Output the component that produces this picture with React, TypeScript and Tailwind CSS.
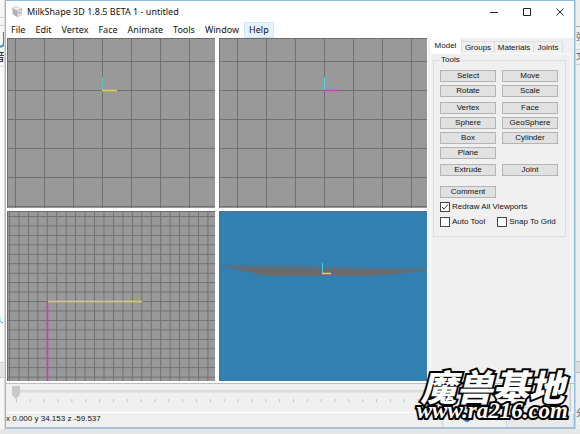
import React, {useState} from 'react';

const menus = ['File', 'Edit', 'Vertex', 'Face', 'Animate', 'Tools', 'Window', 'Help'];

const toolGroups = [
    [['Select', 'Move'], ['Rotate', 'Scale']],
    [['Vertex', 'Face'], ['Sphere', 'GeoSphere'], ['Box', 'Cylinder'], ['Plane']],
    [['Extrude', 'Joint']],
];

const Grid = ({id, x, y, step, children}: {id: string, x: number, y: number, step: number, children?: React.ReactNode}) => (
    <svg className="block h-full w-full bg-[#999999]" aria-hidden="true">
        <defs>
            <pattern id={id} x={x} y={y} width={step} height={step} patternUnits="userSpaceOnUse">
                <path d={`M0 .5H${step}M.5 0V${step}`} stroke="#707070" strokeWidth="1" fill="none" />
            </pattern>
        </defs>
        <rect width="100%" height="100%" fill={`url(#${id})`} />
        <path d="M0 .5H2000M.5 0V2000" stroke="#6c6c6c" fill="none" />
        {children}
    </svg>
)

const ToolButton = ({label}: {label: string}) => (
    <button type="button" className="flex h-3 w-14 items-center justify-center border border-[#b4b4b4] bg-[#e1e1e1] leading-none">
        {label}
    </button>
)

const Check = ({label, checked}: {label: string, checked?: boolean}) => {

    const [on, setOn] = useState(!!checked)

    return (
        <label className="flex items-center gap-0.5 whitespace-nowrap">
            <span className="relative block size-[10px]">
                <input type="checkbox" checked={on} onChange={() => setOn(!on)} className="block size-[10px] appearance-none border border-[#444] bg-white" />
                {on && (
                    <svg viewBox="0 0 10 10" className="pointer-events-none absolute inset-0 size-[10px]">
                        <path d="M2 5l2 2 4-4.5" stroke="#333" strokeWidth="1" fill="none" />
                    </svg>
                )}
            </span>
            {label}
        </label>
    )
}

const TitleBar = () => (
    <header className="flex h-[21px] items-center bg-white pl-[5px] pr-2.5">
        <svg viewBox="0 0 12 12" className="mr-1 size-3">
            <path d="M1 2L5 .5 11 3 6 5z" fill="#eee" stroke="#aaa" strokeWidth=".5" />
            <path d="M1 2L6 5 6.500 11 2 8.500z" fill="#b5b0ae" />
            <path d="M6 5L11 3 10.500 8.500 6.500 11z" fill="#e6e4e3" stroke="#999" strokeWidth=".5" />
            <path d="M7.500 6.500L9.500 5.500 9 7.500 7.500 8z" fill="#a98f8c" />
        </svg>
        <h1 className="flex-1 font-['Noto_Sans',sans-serif] text-[9px] leading-3">MilkShape 3D 1.8.5 BETA 1 - untitled</h1>
        <div className="flex gap-[25px]">
            <button type="button" aria-label="Minimize"><svg viewBox="0 0 8 8" className="size-2"><path d="M0 4.500H8" stroke="#222" /></svg></button>
            <button type="button" aria-label="Maximize"><svg viewBox="0 0 8 8" className="size-2"><path d="M.5 .5H7.500V7.500H.5z" fill="none" stroke="#222" /></svg></button>
            <button type="button" aria-label="Close"><svg viewBox="0 0 8 8" className="size-2"><path d="M.5 .5L7.500 7.500M7.500 .5L.5 7.500" stroke="#222" /></svg></button>
        </div>
    </header>
)

const MenuBar = () => (
    <nav className="flex h-4 bg-white font-['Noto_Sans',sans-serif] text-[9px] leading-4">
        {menus.map((m) => (
            <button key={m} type="button" className={m === 'Help' ? 'border border-[#cfe8fa] bg-[#e5f3ff] px-1 leading-3' : 'px-[5px]'}>{m}</button>
        ))}
    </nav>
)

const Viewports = () => (
    <div className="grid flex-1 grid-cols-2 grid-rows-2 gap-x-1 gap-y-[3px] bg-white px-px pb-0.5">
        <Grid id="front" x={8} y={23} step={29}>
            <path d="M95.500 39V52" stroke="#5fc4bb" />
            <path d="M95 52.500H110" stroke="#dcd63c" strokeWidth="1.500" />
        </Grid>
        <Grid id="side" x={18} y={23} step={29}>
            <path d="M105.500 39V52" stroke="#4fd8dc" />
            <path d="M105 52.500H120" stroke="#d03fd0" strokeWidth="1.500" />
        </Grid>
        <Grid id="top" x={2} y={5} step={9.45}>
            <path d="M40.500 90V2000" stroke="#d62fd6" strokeWidth="1.500" />
            <path d="M41 90.500H135" stroke="#d8d63e" strokeWidth="1.500" />
        </Grid>
        <svg className="block h-full w-full bg-[#327fb2]" aria-hidden="true">
            <path d="M1 54L80 54.500 150 57 208 58 208 60 150 65 47 65 20 59z" fill="#6b6b6b" />
            <path d="M0 56L90 58 208 59M18 54.500L90 56.500 150 58M1 55L60 55.500 110 56" stroke="#3f7ba4" strokeWidth=".6" fill="none" />
            <path d="M35 60.500L110 61.500 185 60.500" stroke="#75675f" strokeWidth=".6" fill="none" />
            <path d="M103.500 52V62" stroke="#36d2dc" />
            <path d="M103 62.500H112" stroke="#e5dc35" strokeWidth="1.500" />
            <path d="M.5 2000V.5H2000" stroke="#557083" fill="none" />
        </svg>
    </div>
)

const SidePanel = () => (
    <aside className="flex w-[146px] flex-col bg-[#f0f0f0] pl-0.5 pr-[3px]">
        <div role="tablist" className="flex items-end">
            <button type="button" role="tab" aria-selected="true" className="h-[15px] w-8 border-r border-[#ddd] bg-white leading-none">Model</button>
            <button type="button" role="tab" className="h-3 w-[33px] border-r border-t border-[#ddd] leading-none">Groups</button>
            <button type="button" role="tab" className="h-3 w-[39px] border-r border-t border-[#ddd] leading-none">Materials</button>
            <button type="button" role="tab" className="h-3 w-[29px] border-r border-t border-[#ddd] leading-none">Joints</button>
        </div>
        <div role="tabpanel" className="flex-1 border border-[#fcfcfc] bg-[#f0f0f0] px-0.5 pt-px">
            <fieldset className="mr-0.5 flex flex-col border border-[#dcdcdc] px-1.5 pb-2">
                <legend className="px-px leading-[10px]">Tools</legend>
                <div className="flex flex-col gap-[5px] pt-[5px]">
                    {toolGroups.map((rows, i) => (
                        <div key={i} className="flex flex-col gap-[3px]">
                            {rows.map((row) => (
                                <div key={row[0]} className="flex gap-1.5">
                                    {row.map((label) => <ToolButton key={label} label={label} />)}
                                </div>
                            ))}
                        </div>
                    ))}
                </div>
                <div className="pt-2.5 pb-[3px]"><ToolButton label="Comment" /></div>
                <div className="flex flex-col gap-[3px]">
                    <Check label="Redraw All Viewports" checked />
                    <div className="flex gap-3">
                        <Check label="Auto Tool" />
                        <Check label="Snap To Grid" />
                    </div>
                </div>
            </fieldset>
        </div>
    </aside>
)

const Timeline = () => {

    const [frame, setFrame] = useState(0)

    return (
        <div className="flex h-[29px] border-t border-[#bdbdbd] bg-[#f0f0f0]">
            <div className="flex-1 pt-0.5">
                <input
                    type="range"
                    aria-label="Frame"
                    value={frame}
                    onChange={(e) => setFrame(Number(e.target.value))}
                    className="mx-1.5 block h-[13px] w-[calc(100%-12px)] appearance-none bg-[linear-gradient(#d6d6d6,#e7e7e7)] bg-[length:100%_3px] bg-[position:0_4px] bg-no-repeat [&::-webkit-slider-thumb]:h-[13px] [&::-webkit-slider-thumb]:w-2 [&::-webkit-slider-thumb]:appearance-none [&::-webkit-slider-thumb]:bg-[#c9c9c9] [&::-webkit-slider-thumb]:[clip-path:polygon(0_0,100%_0,100%_70%,50%_100%,0_70%)]"
                />
                <svg className="block h-1 w-full" aria-hidden="true">
                    <defs>
                        <pattern id="ticks" x="10" width="13.85" height="4" patternUnits="userSpaceOnUse">
                            <path d="M.5 0V3" stroke="#c4c4c4" />
                        </pattern>
                    </defs>
                    <rect x="10" width="100%" height="4" fill="url(#ticks)" />
                </svg>
            </div>
            <div className="mr-[3px] flex w-[134px] gap-1 border-r border-[#ccc] py-1">
                <div className="w-5 border border-[#dcdcdc]"></div>
                <div className="w-12 border border-[#dcdcdc]"></div>
                <div className="flex-1 border border-[#dcdcdc]"></div>
            </div>
        </div>
    )
}

const App = () => {
    return (
        <div className="relative flex min-h-screen overflow-hidden bg-[#e6e6e6] pb-[5px] font-['Liberation_Sans',sans-serif] text-[8px] text-[#111]">
            <div className="flex w-[5px] flex-col overflow-hidden border-r border-[#d9d9d9] bg-[#f7f7f7]">
                <div className="h-[18px] border-b border-[#ccc]"></div>
                <div className="h-2 border-b border-[#ccc]"></div>
                <svg viewBox="0 0 5 16" className="mt-1.5 h-4 w-[5px] shrink-0"><path d="M4 0V11M4 11C4 14 1 15 0 14" stroke="#2c86d2" strokeWidth="2" fill="none" /></svg>
                <span className="-ml-1.5 mt-0.5 w-3 font-['Noto_Sans_CJK_SC',sans-serif] text-[11px] leading-3">音</span>
                <div className="mt-1 h-[296px] border-t border-[#ddd] bg-[#fafafa] pt-[247px] text-[9px] leading-3">
                    <span className="-ml-1">4.</span>
                </div>
                <div className="h-4 border-y border-[#ccc] bg-[#e4e4e4]"></div>
            </div>

            <main className="flex flex-1 flex-col border border-[#8dbedc] border-b-2 border-b-[#a4c2d5] bg-[#f0f0f0]">
                <TitleBar />
                <MenuBar />
                <div className="flex flex-1">
                    <Viewports />
                    <SidePanel />
                </div>
                <Timeline />
                <footer className="flex h-[15px] border-t border-white leading-3">
                    <span className="flex-1">x 0.000 y 34.153 z -59.537</span>
                    <div className="w-16 border-l border-[#d5d5d5]">
                        <svg viewBox="0 0 8 8" className="ml-5 mt-0.5 size-2"><circle cx="4" cy="4" r="3" fill="#1479cf" /></svg>
                    </div>
                    <div className="w-[68px] border-x border-[#d5d5d5] bg-[#e9e9e9]"></div>
                </footer>
            </main>

            <div className="flex w-[5px] flex-col overflow-hidden border-l border-[#d2d2d2] bg-[#eeeeee] font-['Noto_Sans_CJK_SC',sans-serif] text-[9px] leading-3 text-[#555]">
                <div className="h-[27px] border-b border-[#aaa]"></div>
                <div className="mt-1 h-3 w-3">弹</div>
                <div className="mt-1.5 h-4 w-3 border-y border-[#ccc]">文</div>
                <div className="mt-[296px] h-3 border-y border-[#bbb] bg-[#ddd]"></div>
                <div className="mt-[34px] h-3 w-3">分</div>
            </div>

            <div className="pointer-events-none absolute bottom-3.5 right-3 text-center text-white [paint-order:stroke_fill] [-webkit-text-stroke:4px_#000]">
                <div className="font-['Noto_Sans_CJK_SC',sans-serif] text-[36px] font-black italic leading-[34px]">魔兽基地</div>
                <div className="font-['Liberation_Serif',serif] text-[23px] font-bold italic leading-[18px]">www.ra216.com</div>
            </div>
        </div>
    )
}

export default App
